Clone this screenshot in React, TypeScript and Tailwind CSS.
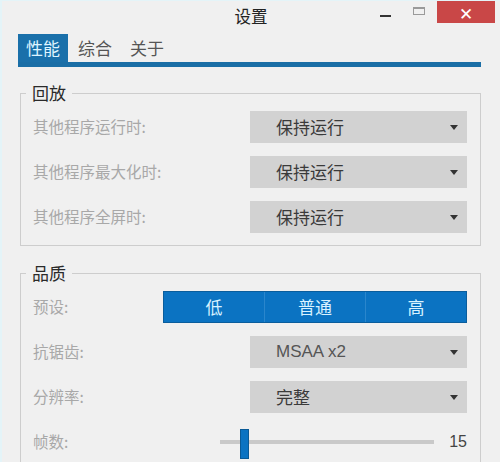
const FONT = "font-['Microsoft_YaHei','Noto_Sans_CJK_SC',sans-serif]";

function Caret() {
  return (
    <svg width="8" height="5" viewBox="0 0 8 5" className="shrink-0">
      <path d="M0 0h8L4 5z" fill="#333" />
    </svg>
  );
}

function Dropdown({ value, latin }: { value: string; latin?: boolean }) {
  return (
    <div className="flex h-[32px] w-[217px] items-center justify-between bg-[#d2d2d2] pl-[26px] pr-[9px]">
      <span
        className={
          latin
            ? "font-['Liberation_Sans',sans-serif] text-[17px] text-[#555]"
            : "text-[17px] text-[#3a3a3a]"
        }
      >
        {value}
      </span>
      <Caret />
    </div>
  );
}

function Row({ label, children }: { label: string; children: React.ReactNode }) {
  return (
    <div className="flex h-[32px] items-center justify-between">
      <span className="text-[15.5px] text-[#a8a8a8]">{label}</span>
      {children}
    </div>
  );
}

function Group({ title, children }: { title: string; children: React.ReactNode }) {
  return (
    <fieldset className="ml-[18px] w-[461px] border border-[#cdcdcd] pb-[12px]">
      <legend className="ml-[5px] px-[6px] text-[17px] leading-[20px] text-[#2a2a2a]">{title}</legend>
      <div className="flex flex-col gap-[13px] pl-[12px] pr-[13px] pt-[8px]">{children}</div>
    </fieldset>
  );
}

export default function App() {
  const presets = ["低", "普通", "高"];
  return (
    <div className={`h-[462px] w-[500px] overflow-hidden border-l-[2px] border-t border-[#e4f4f8] bg-[#f0f0f0] ${FONT}`}>
      {/* title bar */}
      <div className="relative flex h-[33px] items-start justify-center">
        <span className="mt-[3px] text-[16.5px] text-[#222]">设置</span>
        <div className="absolute right-[5px] top-0 flex items-start">
          <div className="mr-[22px] mt-[14px] h-[2px] w-[11px] bg-[#333]" />
          <div className="mr-[12px] mt-[6px] h-[8px] w-[12px] border border-t-2 border-[#9a9a9a]" />
          <div className="flex h-[22px] w-[58px] items-center justify-center bg-[#c94747] text-[17px] leading-none text-white">
            ✕
          </div>
        </div>
      </div>

      {/* tabs */}
      <div className="flex gap-[2px] pl-[16px]">
        <div className="flex h-[28px] items-center bg-[#1a70aa] px-[8px] text-[17px] text-[#dff4ff]">性能</div>
        <div className="flex h-[28px] items-center px-[8px] text-[17px] text-[#555]">综合</div>
        <div className="flex h-[28px] items-center px-[8px] text-[17px] text-[#555]">关于</div>
      </div>
      <div className="ml-[16px] h-[5px] w-[463px] bg-[#1a6ea6]" />

      <div className="mt-[16px]">
        <Group title="回放">
          <Row label="其他程序运行时:">
            <Dropdown value="保持运行" />
          </Row>
          <Row label="其他程序最大化时:">
            <Dropdown value="保持运行" />
          </Row>
          <Row label="其他程序全屏时:">
            <Dropdown value="保持运行" />
          </Row>
        </Group>
      </div>

      <div className="mt-[17px]">
        <Group title="品质">
          <Row label="预设:">
            <div className="flex h-[32px] w-[304px] border border-[#0a5d9c] bg-[#0b73c2]">
              {presets.map((p, i) => (
                <div
                  key={p}
                  className={`flex flex-1 items-center justify-center text-[17px] text-[#d8f2ff] ${i > 0 ? "border-l border-[#2a86cc]" : ""}`}
                >
                  {p}
                </div>
              ))}
            </div>
          </Row>
          <Row label="抗锯齿:">
            <Dropdown value="MSAA x2" latin />
          </Row>
          <Row label="分辨率:">
            <Dropdown value="完整" />
          </Row>
          <Row label="帧数:">
            <div className="flex w-[247px] items-center justify-between">
              <div className="relative flex h-[30px] w-[214px] items-center">
                <div className="h-[4px] w-full bg-[#c9c9c9]" />
                <div className="absolute left-[20px] top-[2px] h-[30px] w-[9px] border border-[#0a5a96] bg-[#0b73c2]" />
              </div>
              <span className="font-['Liberation_Sans',sans-serif] text-[16px] text-[#444]">15</span>
            </div>
          </Row>
        </Group>
      </div>
    </div>
  );
}
